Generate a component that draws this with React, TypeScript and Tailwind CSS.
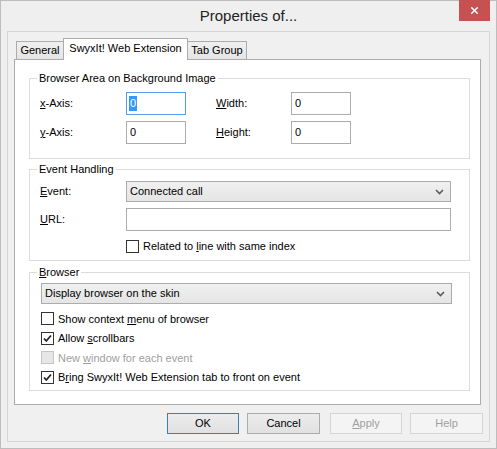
import { X } from "lucide-react";

const font = { fontFamily: '"Liberation Sans", Arial, sans-serif' };

function Chevron() {
  return (
    <svg width="9" height="6" viewBox="0 0 9 6" className="text-[#5a5a5a]">
      <path d="M1 1 L4.5 4.5 L8 1" fill="none" stroke="currentColor" strokeWidth="1.6" />
    </svg>
  );
}

function Check() {
  return (
    <svg width="11" height="11" viewBox="0 0 11 11">
      <path d="M2 5.5 L4.3 8 L9 2.5" fill="none" stroke="#222" strokeWidth="1.8" />
    </svg>
  );
}

function CheckBox({ checked, disabled, children }: { checked?: boolean; disabled?: boolean; children: React.ReactNode }) {
  return (
    <div className="flex items-center h-[19.5px]">
      <span
        className={
          "w-[13px] h-[13px] border flex items-center justify-center " +
          (disabled ? "border-[#c5c5c5] bg-[#e6e6e6]" : "border-[#333] bg-white")
        }
      >
        {checked && <Check />}
      </span>
      <span className={"ml-[4px] " + (disabled ? "text-[#a0a0a0]" : "text-black")}>{children}</span>
    </div>
  );
}

function Group({ title, children }: { title: React.ReactNode; children: React.ReactNode }) {
  return (
    <div className="border border-[#dcdcdc] w-[441px] ml-[14px]">
      <div className="-mt-[8px] ml-[7px] px-[2px] bg-white w-fit leading-[15px]">{title}</div>
      {children}
    </div>
  );
}

function Select({ value, w }: { value: string; w: string }) {
  return (
    <div
      className={
        w +
        " h-[21px] border border-[#acacac] bg-gradient-to-b from-[#f0f0f0] to-[#e5e5e5] flex items-center justify-between pl-[3px] pr-[6px]"
      }
    >
      <span>{value}</span>
      <Chevron />
    </div>
  );
}

export default function App() {
  return (
    <div style={font} className="w-[497px] h-[449px] border border-[#bdbdbd] bg-[#efefef] flex flex-col text-[11px] text-black">
      {/* title bar */}
      <div className="relative h-[30px] flex items-center justify-center">
        <span className="text-[15px] text-[#222] mt-[1px]">Properties of...</span>
        <div className="absolute right-[6px] top-[-1px] w-[31px] h-[21px] bg-[#c75050] flex items-center justify-center">
          <X size={11} strokeWidth={3} className="text-white" />
        </div>
      </div>

      {/* inner frame */}
      <div className="mx-[6px] h-[411px] border border-[#d5d5d5] bg-[#f0f0f0] flex flex-col">
        <div className="pl-[6px] pt-[6px]">
          {/* tabs */}
          <div className="flex items-end pl-[2px] h-[21px]">
            <div className="h-[18px] w-[47px] border border-[#acacac] border-r-0 border-b-0 bg-gradient-to-b from-[#f0f0f0] to-[#e5e5e5] flex items-center justify-center">
              General
            </div>
            <div className="relative z-10 h-[22px] -mb-[1px] w-[125px] border border-[#acacac] border-b-0 bg-white flex items-center justify-center pb-[2px]">
              SwyxIt! Web Extension
            </div>
            <div className="h-[18px] w-[59px] border border-[#acacac] border-l-0 border-b-0 bg-gradient-to-b from-[#f0f0f0] to-[#e5e5e5] flex items-center justify-center">
              Tab Group
            </div>
          </div>

          {/* panel */}
          <div className="w-[467px] h-[346px] border border-[#acacac] bg-white pt-[18px]">
            <Group title="Browser Area on Background Image">
              <div className="grid grid-cols-[86px_60px_30px_75px_60px] gap-y-[6px] items-center pl-[10px] mt-[6px] pb-[14px]">
                <span><u>x</u>-Axis:</span>
                <div className="h-[23px] border border-[#569de5] flex items-center pl-[2px]">
                  <span className="bg-[#3399ff] text-white px-[1px] leading-[15px]">0</span>
                </div>
                <span />
                <span><u>W</u>idth:</span>
                <div className="h-[23px] border border-[#acacac] flex items-center pl-[3px]">0</div>

                <span><u>y</u>-Axis:</span>
                <div className="h-[23px] border border-[#acacac] flex items-center pl-[3px]">0</div>
                <span />
                <span><u>H</u>eight:</span>
                <div className="h-[23px] border border-[#acacac] flex items-center pl-[3px]">0</div>
              </div>
            </Group>

            <div className="h-[10px]" />

            <Group title="Event Handling">
              <div className="pl-[10px] mt-[4px] pb-[6px] flex flex-col">
                <div className="flex items-center">
                  <span className="w-[86px]"><u>E</u>vent:</span>
                  <Select value="Connected call" w="w-[325px]" />
                </div>
                <div className="flex items-center mt-[6px]">
                  <span className="w-[86px]"><u>U</u>RL:</span>
                  <div className="w-[325px] h-[23px] border border-[#acacac]" />
                </div>
                <div className="ml-[86px] mt-[7px] flex items-center h-[16px]">
                  <span className="w-[13px] h-[13px] border border-[#333] bg-white" />
                  <span className="ml-[4px]">Related to <u>l</u>ine with same index</span>
                </div>
              </div>
            </Group>

            <div className="h-[11px]" />

            <Group title={<span><u>B</u>rowser</span>}>
              <div className="pl-[11px] mt-[3px] pb-[3px] flex flex-col">
                <Select value="Display browser on the skin" w="w-[411px]" />
                <div className="mt-[5px] flex flex-col">
                  <CheckBox>Show context <u>m</u>enu of browser</CheckBox>
                  <CheckBox checked>Allow <u>s</u>crollbars</CheckBox>
                  <CheckBox disabled>New <u>w</u>indow for each event</CheckBox>
                  <CheckBox checked>B<u>r</u>ing SwyxIt! Web Extension tab to front on event</CheckBox>
                </div>
              </div>
            </Group>
          </div>
        </div>

        {/* buttons */}
        <div className="flex justify-end gap-[8px] pr-[6px] mt-[8px]">
          <div className="w-[72px] h-[21px] border border-[#3c7fb1] bg-gradient-to-b from-[#ececec] to-[#e1e1e1] flex items-center justify-center">OK</div>
          <div className="w-[73px] h-[21px] border border-[#acacac] bg-gradient-to-b from-[#ececec] to-[#e1e1e1] flex items-center justify-center">Cancel</div>
          <div className="w-[72px] h-[21px] ml-[2px] border border-[#d5d5d5] bg-[#f4f4f4] text-[#a0a0a0] flex items-center justify-center"><span><u>A</u>pply</span></div>
          <div className="w-[73px] h-[21px] border border-[#d5d5d5] bg-[#f4f4f4] text-[#a0a0a0] flex items-center justify-center">Help</div>
        </div>
      </div>
    </div>
  );
}
